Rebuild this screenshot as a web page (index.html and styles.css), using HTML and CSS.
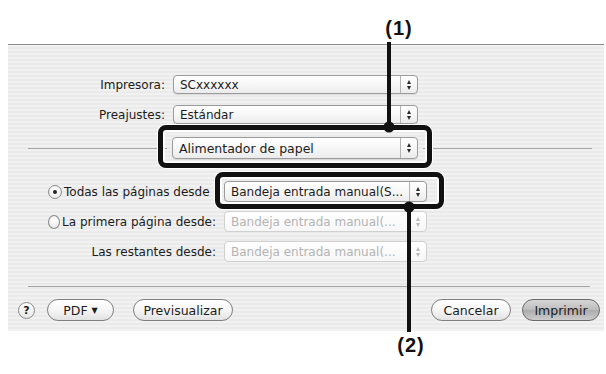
FILE: index.html
```html
<!DOCTYPE html>
<html lang="es">
<head>
<meta charset="utf-8">
<title>Imprimir</title>
<link rel="stylesheet" href="styles.css">
</head>
<body>
<div class="page">
  <div class="dialog">
    <div class="fields">
      <span class="label">Impresora:</span>
      <div class="popup"><span class="ptext">SCxxxxxx</span><span class="stepper"><i class="up"></i><i class="down"></i></span></div>
      <span class="label">Preajustes:</span>
      <div class="popup"><span class="ptext">Estándar</span><span class="stepper"><i class="up"></i><i class="down"></i></span></div>
    </div>

    <div class="divider-row">
      <span class="line left"></span>
      <div class="popup big"><span class="ptext">Alimentador de papel</span><span class="stepper"><i class="up"></i><i class="down"></i></span></div>
      <span class="line right"></span>
    </div>

    <div class="sources">
      <label class="radio-label"><span class="radio on"></span>Todas las páginas desde</label>
      <div class="popup src"><span class="ptext">Bandeja entrada manual(S...</span><span class="stepper"><i class="up"></i><i class="down"></i></span></div>
      <label class="radio-label"><span class="radio"></span>La primera página desde:</label>
      <div class="popup src disabled"><span class="ptext">Bandeja entrada manual(...</span><span class="stepper"><i class="up"></i><i class="down"></i></span></div>
      <span class="label">Las restantes desde:</span>
      <div class="popup src disabled"><span class="ptext">Bandeja entrada manual(...</span><span class="stepper"><i class="up"></i><i class="down"></i></span></div>
    </div>

    <div class="separator"></div>

    <div class="buttons">
      <span class="help">?</span>
      <span class="btn pdf">PDF <span class="tri">▼</span></span>
      <span class="btn preview">Previsualizar</span>
      <span class="spacer"></span>
      <span class="btn cancel">Cancelar</span>
      <span class="btn print">Imprimir</span>
    </div>
  </div>

  <div class="callout-label label1">(1)</div>
  <div class="callout-line line1"></div>
  <div class="callout-box box1"></div>
  <div class="callout-dot dot1"></div>

  <div class="callout-box box2"></div>
  <div class="callout-line line2"></div>
  <div class="callout-dot dot2"></div>
  <div class="callout-label label2">(2)</div>
</div>
</body>
</html>
```

FILE: styles.css
```css
* { box-sizing: border-box; }

body {
  margin: 0;
  background: #ffffff;
  font-family: "DejaVu Sans", "Noto Sans", sans-serif;
  font-size: 12px;
  color: #1c1c1c;
}

.page {
  position: relative;
  width: 606px;
  height: 374px;
  padding-top: 44px;
  overflow: hidden;
}

.dialog {
  margin-left: 8px;
  width: 596px;
  height: 287px;
  border-top: 1px solid #8e8e8e;
  background: repeating-linear-gradient(#f1f1f1 0 2px, #eaeaea 2px 4px);
  padding-top: 30px;
  display: flex;
  flex-direction: column;
}

/* top fields */
.fields {
  display: grid;
  grid-template-columns: 157px 245px;
  column-gap: 8px;
  row-gap: 11px;
  align-items: center;
}

.label {
  justify-self: end;
  white-space: nowrap;
}

/* popup menus */
.popup {
  height: 19px;
  display: flex;
  align-items: stretch;
  border: 1px solid #9b9b9b;
  border-radius: 4px;
  background: linear-gradient(#ffffff, #f7f7f7 50%, #ebebeb);
  box-shadow: 0 1px 0 rgba(0,0,0,0.08);
}

.ptext {
  flex: 1;
  display: flex;
  align-items: center;
  padding-left: 6px;
  white-space: nowrap;
  overflow: hidden;
}

.stepper {
  width: 17px;
  border-left: 1px solid #b3b3b3;
  display: flex;
  flex-direction: column;
  align-items: center;
  justify-content: center;
  gap: 2px;
}

.stepper i {
  display: block;
  width: 0;
  height: 0;
  border-left: 2.5px solid transparent;
  border-right: 2.5px solid transparent;
}

.stepper .up { border-bottom: 4px solid #2a2a2a; }
.stepper .down { border-top: 4px solid #2a2a2a; }

.popup.big {
  height: 22px;
  width: 246px;
  font-size: 12.5px;
}

.popup.src {
  height: 21px;
}

.popup.disabled {
  border-color: #d0d0d0;
  background: linear-gradient(#ffffff, #f6f6f6);
  color: #b4b4b4;
  box-shadow: none;
}

.popup.disabled .stepper { border-left-color: #dadada; }
.popup.disabled .stepper .up { border-bottom-color: #b8b8b8; }
.popup.disabled .stepper .down { border-top-color: #b8b8b8; }

/* divider with popup */
.divider-row {
  margin-top: 13px;
  padding: 0 12px 0 20px;
  display: flex;
  align-items: center;
  gap: 5px;
}

.divider-row .line {
  height: 1px;
  background: #a4a4a4;
}

.divider-row .line.left { width: 139px; }
.divider-row .line.right { flex: 1; }

/* source rows */
.sources {
  margin-top: 22px;
  padding-left: 40px;
  display: grid;
  grid-template-columns: 168px 203px;
  column-gap: 8px;
  row-gap: 9px;
  align-items: center;
}

.radio-label {
  display: flex;
  align-items: center;
  gap: 2px;
  white-space: nowrap;
}

.radio {
  width: 14px;
  height: 14px;
  border-radius: 50%;
  border: 1px solid #8a8a8a;
  background: radial-gradient(circle at 50% 35%, #ffffff, #e4e4e4);
  display: flex;
  align-items: center;
  justify-content: center;
}

.radio.on::after {
  content: "";
  width: 4px;
  height: 4px;
  border-radius: 50%;
  background: #222;
}

/* separator */
.separator {
  margin: 24px 14px 0 20px;
  height: 1px;
  background: #a4a4a4;
}

/* buttons */
.buttons {
  margin-top: 12px;
  padding: 0 4px 0 10px;
  display: flex;
  align-items: center;
}

.help {
  width: 17px;
  height: 17px;
  border-radius: 50%;
  border: 1px solid #8a8a8a;
  background: linear-gradient(#ffffff, #e6e6e6);
  display: flex;
  align-items: center;
  justify-content: center;
  font-weight: bold;
  font-size: 11px;
  margin-right: 12px;
}

.btn {
  height: 22px;
  border-radius: 11px;
  border: 1px solid #7f7f7f;
  background: linear-gradient(#ffffff, #f6f6f6 50%, #e2e2e2);
  display: flex;
  align-items: center;
  justify-content: center;
  white-space: nowrap;
  font-size: 12.5px;
}

.btn.pdf { width: 67px; margin-right: 19px; }
.btn.pdf .tri { font-size: 8px; margin-left: 4px; }
.btn.preview { width: 100px; }
.spacer { flex: 1; }
.btn.cancel { width: 80px; margin-right: 11px; }
.btn.print {
  width: 78px;
  border-color: #6a6a6a;
  background: linear-gradient(#d6d6d6, #bcbcbc 50%, #acacac 51%, #cbcbcb);
}

/* callouts (overlay annotations) */
.callout-label {
  position: absolute;
  font-family: "Liberation Sans", Arial, sans-serif;
  font-weight: bold;
  font-size: 20px;
  letter-spacing: 1px;
  color: #111;
  transform: translateX(-50%);
  line-height: 1;
}

.label1 { left: 399px; top: 18px; }
.label2 { left: 411px; top: 335px; }

.callout-line {
  position: absolute;
  width: 4px;
  background: #111;
}

.line1 { left: 387px; top: 42px; height: 86px; }
.line2 { left: 407px; top: 206px; height: 126px; }

.callout-box {
  position: absolute;
  border: 5px solid #111;
  border-radius: 8px;
  box-shadow: inset 0 0 0 2px #fff, 0 0 0 1px #fff;
}

.box1 { left: 158px; top: 125px; width: 274px; height: 43px; }
.box2 { left: 215px; top: 172px; width: 229px; height: 37px; }

.callout-dot {
  position: absolute;
  width: 11px;
  height: 11px;
  border-radius: 50%;
  background: #111;
  transform: translate(-50%, -50%);
}

.dot1 { left: 389px; top: 127px; }
.dot2 { left: 409px; top: 207px; }
```
